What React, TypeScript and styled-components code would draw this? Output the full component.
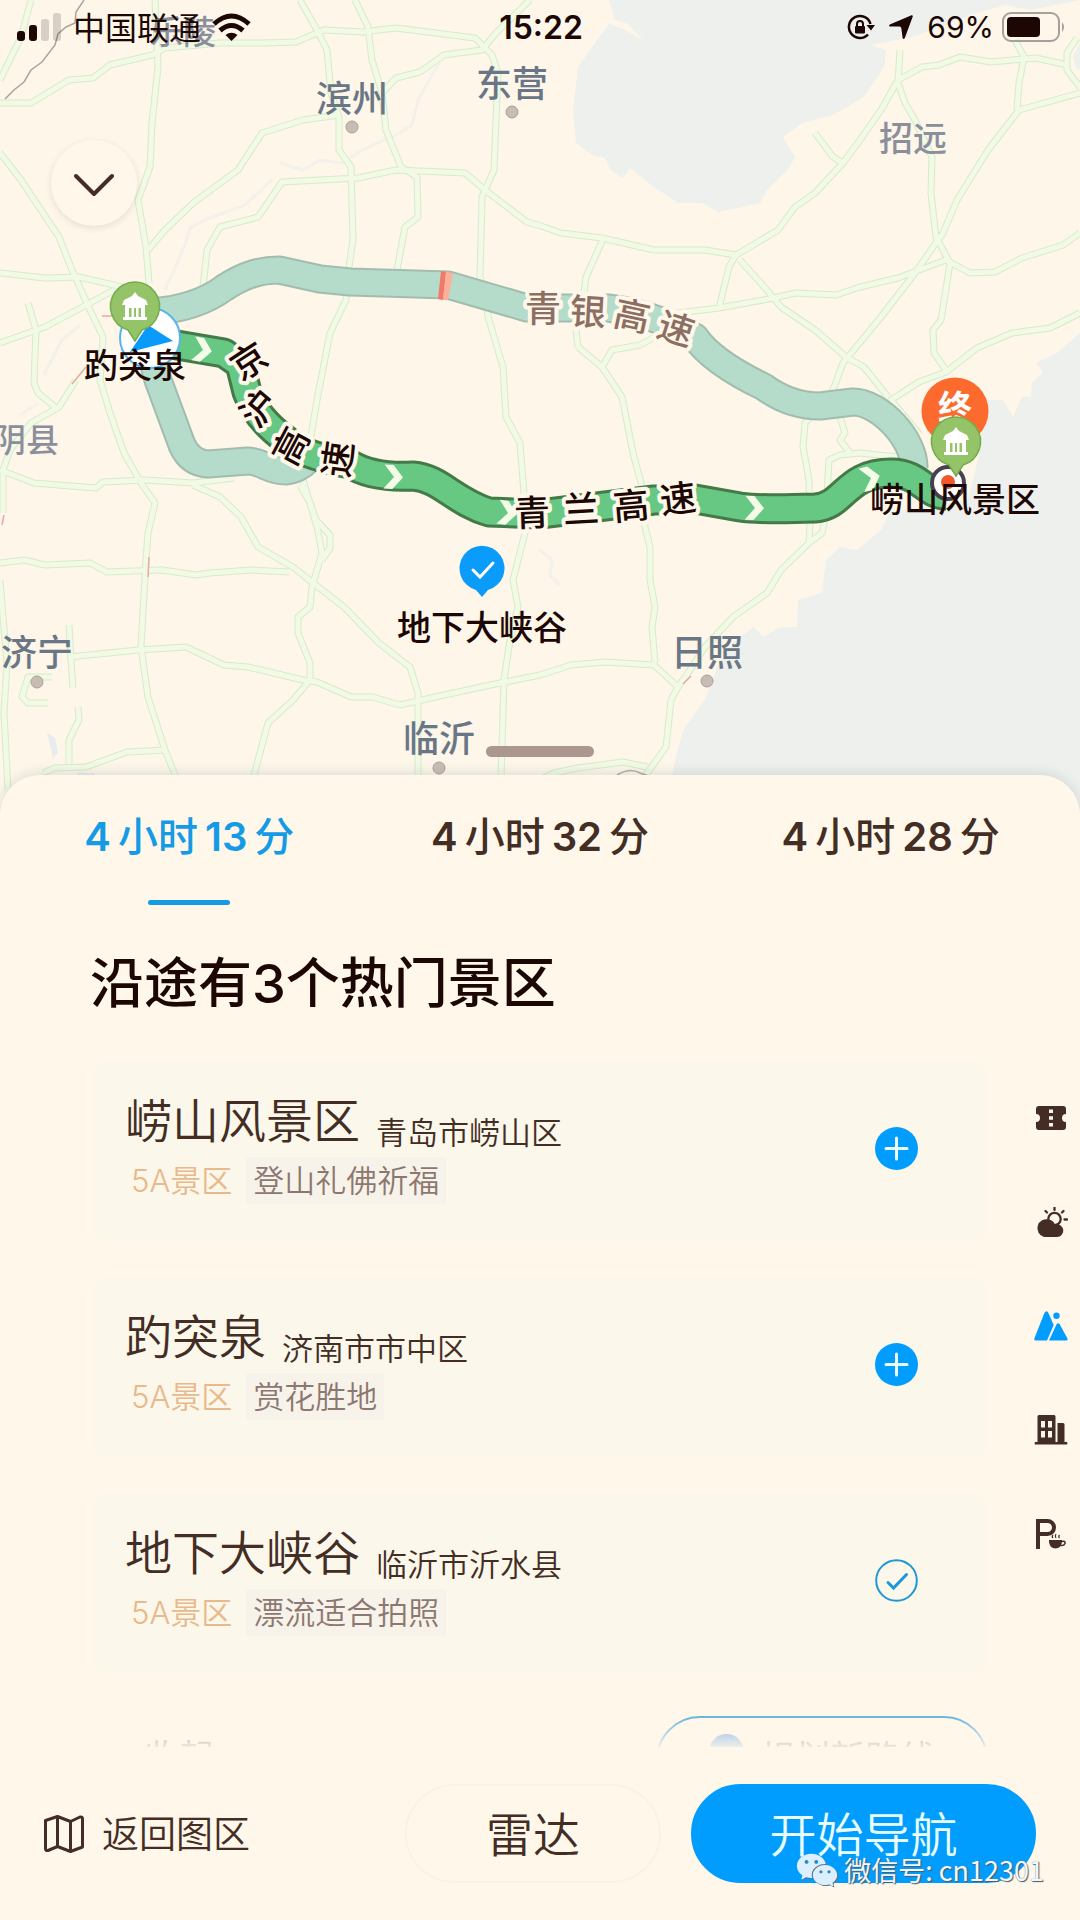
import React, { useState } from "react";
import styled, { createGlobalStyle } from "styled-components";
import { AiFillWechat } from "react-icons/ai";

const fontStack = `Inter, "Noto Sans CJK SC", sans-serif`;
const color = {
  sheet: "#fff8ea",
  card: "#fbf7ea",
  chip: "#f8f3ea",
  ink: "#1c0705",
  brown: "#432d25",
  muted: "#8c7870",
  gold: "#e8b98b",
  blue: "#009dff",
  tab: "#159be6",
};

const GlobalStyle = createGlobalStyle`
  * { box-sizing: border-box; }
  body { margin: 0; background: ${color.sheet}; font-family: ${fontStack}; }
  button { font: inherit; border: 0; background: none; padding: 0; margin: 0; cursor: pointer; }
`;

const Page = styled.main`
  display: flex;
  flex-direction: column;
  height: 100vh;
  overflow: hidden;
  background: ${color.sheet};
`;

/* ---------- map ---------- */

const MapArea = styled.section`
  position: relative;
  flex: none;
`;
const MapSvg = styled.svg`
  display: block;
  width: 100%;
  height: auto;
  font-family: "Noto Sans CJK SC", sans-serif;
  text-anchor: middle;
`;
const StatusBar = styled.header`
  position: absolute;
  inset: 0 0 auto;
  height: 54px;
  padding: 0 14px 0 16px;
  display: grid;
  grid-template-columns: 1fr auto 1fr;
  align-items: center;
  color: ${color.ink};
  font-size: 30px;
`;
const StatusSide = styled.div<{ $end?: boolean; $gap: number }>`
  display: flex;
  align-items: center;
  justify-content: ${(p) => (p.$end ? "flex-end" : "flex-start")};
  gap: ${(p) => p.$gap}px;
`;
const Carrier = styled.span`
  padding-bottom: 2px;
  font-size: 32px;
  line-height: 40px;
  font-family: "Noto Sans CJK SC", sans-serif;
`;
const Clock = styled.time`
  font-size: 32px;
  font-weight: 600;
`;
const Collapse = styled.button`
  position: absolute;
  left: 51px;
  top: 140px;
  width: 86px;
  height: 86px;
  padding-top: 4px;
  border-radius: 50%;
  background: ${color.sheet};
  box-shadow: 0 2px 6px rgba(110, 80, 60, 0.14);
  display: grid;
  place-items: center;
`;
const Handle = styled.div`
  position: absolute;
  left: 50%;
  bottom: 53px;
  width: 108px;
  height: 11px;
  margin-left: -54px;
  border-radius: 6px;
  background: #ab978e;
`;

/* ---------- sheet ---------- */

const Sheet = styled.section`
  position: relative;
  flex: 1;
  min-height: 0;
  margin-top: -35px;
  display: flex;
  flex-direction: column;
  border-radius: 40px 40px 0 0;
  background: ${color.sheet};
  box-shadow: 0 -2px 12px rgba(90, 110, 130, 0.18);
`;
const Tabs = styled.div`
  display: flex;
  flex: none;
  padding: 0 14px;
`;
const Tab = styled.button<{ $active: boolean }>`
  flex: 1;
  display: flex;
  flex-direction: column;
  align-items: center;
  padding-top: 38px;
  color: ${(p) => (p.$active ? color.tab : color.brown)};

  &::after {
    content: "";
    width: 82px;
    height: 5px;
    margin-top: 39px;
    border-radius: 3px;
    background: ${(p) => (p.$active ? color.tab : "transparent")};
  }
`;
const TabText = styled.span`
  display: flex;
  align-items: center;
  gap: 7px;
  font-size: 40px;
  line-height: 48px;
  font-weight: 500;
`;
const Num = styled.b`
  font-weight: 600;
`;
const Title = styled.h1`
  flex: none;
  margin: 47px 90px 44px;
  font-size: 54px;
  line-height: 64px;
  font-weight: 500;
  color: ${color.ink};
`;
const Body = styled.div`
  flex: 1;
  min-height: 0;
  display: flex;
  padding-left: 92px;
  overflow: hidden;
`;
const List = styled.ul`
  flex: 1;
  margin: 0;
  padding: 0;
  list-style: none;
  display: flex;
  flex-direction: column;
  gap: 34px;
`;
const Card = styled.li`
  flex: none;
  display: flex;
  align-items: center;
  justify-content: space-between;
  padding: 33px 70px 38px 33px;
  border-radius: 20px;
  background: ${color.card};
`;
const NameRow = styled.div`
  display: flex;
  align-items: flex-end;
  gap: 16px;
  color: ${color.brown};
`;
const Name = styled.h2`
  margin: 0;
  font-size: 47px;
  line-height: 56px;
  font-weight: 350;
`;
const Place = styled.span`
  font-size: 31px;
  line-height: 32px;
  font-weight: 350;
`;
const TagRow = styled.div`
  display: flex;
  align-items: center;
  margin-top: 8px;
  font-size: 31px;
  line-height: 47px;
  font-weight: 350;
`;
const Grade = styled.span`
  padding: 0 14px 0 6px;
  color: ${color.gold};
`;
const Chip = styled.span`
  padding: 0 7px;
  border-radius: 4px;
  background: ${color.chip};
  color: ${color.muted};
`;
const RoundButton = styled.button`
  width: 43px;
  height: 43px;
  flex: none;
  svg { display: block; }
`;
const FooterRow = styled.li`
  flex: none;
  display: flex;
  align-items: center;
  justify-content: space-between;
  padding: 8px 0 0 52px;
`;
const FoldButton = styled.button`
  padding-bottom: 12px;
  font-size: 35px;
  color: ${color.muted};
`;
const PlanButton = styled.button`
  width: 332px;
  height: 88px;
  padding-bottom: 10px;
  display: flex;
  align-items: center;
  justify-content: center;
  gap: 16px;
  border: 2px solid #5aaedb;
  border-radius: 44px;
  font-size: 35px;
  color: ${color.muted};
`;
const Dot = styled.i`
  width: 35px;
  height: 42px;
  border-radius: 18px;
  background: #6fa8e6;
`;
const Rail = styled.nav`
  width: 92px;
  padding: 6px 11px 0 0;
  display: flex;
  flex-direction: column;
  align-items: flex-end;
`;
const RailButton = styled.button<{ $active?: boolean }>`
  width: 36px;
  height: 104px;
  flex: none;
  display: grid;
  place-items: center;
  color: ${(p) => (p.$active ? color.blue : color.brown)};
`;

/* ---------- bottom bar ---------- */

const BottomBar = styled.footer`
  position: relative;
  flex: none;
  display: flex;
  align-items: center;
  gap: 30px;
  padding: 37px 44px 37px;
  background: ${color.sheet};
  box-shadow: 0 -1px 2px rgba(140, 90, 60, 0.04);

  &::before {
    content: "";
    position: absolute;
    inset: -34px 0 auto;
    height: 34px;
    background: linear-gradient(rgba(255, 248, 234, 0), rgba(255, 248, 234, 0.88));
  }
`;
const BackButton = styled.button`
  display: flex;
  align-items: center;
  gap: 18px;
  margin-right: auto;
  font-size: 37px;
  font-weight: 350;
  color: ${color.brown};
`;
const BackLabel = styled.span`
  padding-bottom: 4px;
`;
const Pill = styled.button<{ $primary?: boolean }>`
  width: ${(p) => (p.$primary ? 345 : 256)}px;
  height: 99px;
  padding-bottom: 4px;
  border-radius: 50px;
  border: 2px solid ${(p) => (p.$primary ? color.blue : "#fbf1e4")};
  background: ${(p) => (p.$primary ? color.blue : "transparent")};
  color: ${(p) => (p.$primary ? "#e9ffff" : color.brown)};
  font-size: 47px;
  font-weight: 350;
`;
const Watermark = styled.div`
  position: absolute;
  right: 36px;
  bottom: 27px;
  display: flex;
  align-items: center;
  gap: 4px;
  font-family: "Noto Sans CJK SC", sans-serif;
  font-size: 27px;
  line-height: 40px;
  color: #eef8ff;
  text-shadow: 1px 1px 1px #4c5a66, 0 0 1px #6b7680;
  pointer-events: none;
  svg { color: #dcefff; filter: drop-shadow(1px 1px 0 #5f7485); }
`;

/* ---------- map data ---------- */

const seas = [
  "609,0 614,17 595,43 578,67 573,110 576,143 592,155 605,158 611,170 623,178 630,168 654,187 678,203 702,203 719,212 760,203 767,190 788,170 795,157 783,137 802,123 833,115 864,97 884,67 886,50 870,45 912,37 946,25 970,15 1005,5 1030,10 1080,0",
  "1080,333 1057,353 1036,363 1043,372 1032,383 1031,397 1022,397 1013,417 1003,400 988,400 983,420 978,460 968,500 890,512 881,530 857,550 840,547 826,560 822,593 798,600 797,627 778,628 764,637 753,627 733,643 719,663 705,700 685,727 678,747 665,810 1080,810",
  "1080,44 1073,55 1076,68 1080,70",
];

const roads = [
  "155,0 157,43 158,67 152,123 150,167 138,200 146,247 149,283",
  "31,0 21,37 0,80",
  "0,103 31,103 69,80 93,78 110,65 152,55 165,48 220,43 265,43 296,42 324,30 362,32 396,28 475,38 492,55 498,73 496,120 494,170 482,197 480,277 489,320 503,367 506,417 520,443 524,493 525,533 513,580 518,607 510,640 504,680 500,810",
  "300,0 317,30 327,50 331,93 339,117 339,150 351,167 353,240 349,267 346,300 330,333 317,400 312,430 303,480 317,527 322,553 312,587 310,607 298,617 298,633 310,663 310,680 293,700 268,723 250,790",
  "355,0 368,27 372,60 382,93 386,130 401,167 417,177 418,217 405,227 396,275",
  "530,0 496,33 482,50 444,55 420,72 396,78 382,93",
  "148,250 165,230 193,203 238,170 262,133 303,120 339,115",
  "203,287 207,250 220,227 258,217 282,182 358,178 396,170 465,173 485,190 527,222 541,226 561,233 602,238 654,250 705,250 736,255",
  "0,153 21,180 59,237 72,270 90,310 103,337 100,380 110,413 124,453 141,483 155,503 148,533 146,560 141,647 148,697 165,750 185,800",
  "0,273 45,278 79,277 114,285 140,293",
  "0,343 45,327 90,303 114,290",
  "28,303 36,330 34,383 38,393 55,407",
  "76,380 59,407 31,423 10,450 3,470 3,513",
  "0,470 34,483 96,488 103,482 145,480 193,483 234,478",
  "193,485 220,497 241,517 258,547 293,567 313,583 344,607 379,643 410,667 418,693 418,790",
  "0,563 24,560 45,565 90,563 107,572 162,570 196,575 210,573 251,570 289,572",
  "69,657 138,650 186,647 224,665 248,667 303,680 317,682 351,697 372,697 400,705 444,695 500,683 540,675 571,665 605,662 654,665 678,687 671,700 666,747 635,790",
  "0,580 5,640 7,663 4,713 8,790",
  "69,625 71,660 73,688",
  "78,707 79,720 69,740 69,763",
  "43,773 55,768 86,767 127,752 165,750",
  "52,677 28,677 22,697 28,703 48,703",
  "300,485 310,503 316,520 330,535 330,548 322,560",
  "530,785 554,773 578,768 623,762 647,767",
  "678,687 688,673 705,647 733,617 767,593 781,570 809,543 822,533 826,513 829,460 840,455 860,453 898,457",
  "809,543 810,523 809,480 803,447 805,423 833,390 843,363 881,317 915,273 933,247 943,233 957,200 988,150 1019,110 1080,93",
  "578,347 602,367 622,397 626,417 633,453 643,490 645,527 650,547 650,580 655,607 652,627 655,663",
  "604,237 586,277 584,293 576,330 578,347",
  "602,367 612,350 640,345 655,337",
  "670,314 719,308 774,298 795,293 836,295 860,287 898,278 946,260 970,273 995,272 1022,258 1063,245 1080,233",
  "719,308 729,267 736,255 753,245 778,230 795,207 815,193 843,163 860,140 881,110 898,80 922,67 939,65 960,57 991,62 1036,58 1067,65",
  "1077,38 1067,53 1067,70 1080,87",
  "900,50 898,83 905,103 915,120 932,157 931,193 936,237 950,263 941,320 933,330 934,353 946,370",
  "1015,40 1024,57 1019,83 1017,110",
  "815,133 833,157 843,163",
  "740,260 767,290 781,307 815,330 846,357 864,367 888,397",
  "1080,313 1050,328 1012,333 977,348 946,372 919,382 891,400 920,435",
  "840,417 845,433 840,440 850,453",
];

const rivers = [
  "280,163 303,170 320,160 342,163 362,150 396,135 412,125 418,100 432,75 440,62",
  "165,290 185,245 190,228 205,220 245,205 272,180",
  "540,550 552,560 550,575 560,585",
  "44,375 62,340 80,325",
  "20,415 38,403",
];

const upperRoute =
  "M150 312C190 309 212 297 224 288C244 275 260 270 279 270L320 279L350 282L448 285L527 308L608 308Q655 314 695 337Q712 362 764 387Q790 406 820 406L853 402C880 402 915 440 914 468";
const lowerRoute =
  "M150 350L158 380L182 445Q190 463 208 464L248 461C262 461 268 471 286 471Q298 470 308 460";
const mainRoute =
  "M165 343L224 353L240 364L247 392Q256 418 286 440Q300 455 350 464Q372 478 413 476C440 478 455 502 489 512L540 514L654 500L695 499L740 507Q760 510 815 508C845 506 845 473 891 473C920 473 925 495 946 495";

const cities = [
  { t: "滨州", x: 352, y: 112, s: 36, dot: 127 },
  { t: "东营", x: 512, y: 97, s: 36, dot: 112 },
  { t: "济宁", x: 37, y: 666, s: 36, dot: 682 },
  { t: "日照", x: 707, y: 666, s: 36, dot: 681 },
  { t: "临沂", x: 439, y: 752, s: 36, dot: 768 },
];
const towns = [
  { t: "招远", x: 913, y: 151, s: 34 },
  { t: "乐陵", x: 183, y: 44, s: 33 },
  { t: "阴县", x: 26, y: 452, s: 33 },
];

type Glyph = [string, number, number, number];
const fadedLabel: Glyph[] = [["青", 543, 309, 0], ["银", 588, 312, 3], ["高", 632, 316, 12], ["速", 676, 329, 18]];
const mainLabel: Glyph[] = [
  ["京", 249, 361, -33], ["沪", 259, 408, -50], ["高", 291, 446, -62], ["速", 338, 459, -82],
  ["青", 532, 513, -2], ["兰", 581, 509, -3], ["高", 631, 506, -5], ["速", 678, 499, -7],
];

const RoadLabel = ({ glyphs, fill }: { glyphs: Glyph[]; fill: string }) => (
  <g fontSize={36} fontWeight={500} fill={fill} stroke="#fff8ea" strokeWidth={8} strokeLinejoin="round" paintOrder="stroke">
    {glyphs.map(([ch, x, y, r]) => (
      <text key={`${ch}${x}`} y={13} transform={`translate(${x} ${y}) rotate(${r})`}>{ch}</text>
    ))}
  </g>
);

const ScenicPin = ({ x, y }: { x: number; y: number }) => (
  <g transform={`translate(${x} ${y})`}>
    <path d="M0 35L-7 24A24.500 24.500 0 1 1 7 24Z" fill="#94c467" stroke="#74ab4c" strokeWidth="1.500" />
    <g fill="#fff">
      <path d="M0 -14L3 -10L11 -6L13 -1H-13L-11 -6L-3 -10Z" />
      <path d="M-10 -1h4v12h-4zM6 -1h4v12h-4zM-3.500 2h2.500v9h-2.500zM1 2h2.500v9h-2.500zM-12 11h24v3h-24z" />
      <path d="M-8 -1h16v3h-16z" />
    </g>
  </g>
);

const RouteMap = () => (
  <MapSvg viewBox="0 0 1080 810" role="img" aria-label="路线地图">
    <rect width="1080" height="810" fill="#fdf6e9" />
    {seas.map((p) => <polygon key={p} points={p} fill="#edf0ec" />)}
    <path d="M575 10L603 16L628 24L643 40L625 30L600 20Z" fill="#fdf6e9" />
    <g fill="none" stroke="#f4f0ea" strokeWidth="3">
      {rivers.map((p) => <polyline key={p} points={p} />)}
    </g>
    <path d="M77 773h18v16h-18zM47 733l8 5 3 15-5 5z" fill="#e9ecee" />
    <g fill="none" strokeLinejoin="round">
      <g stroke="#d6ebcd" strokeWidth="7">{roads.map((p) => <polyline key={p} points={p} />)}</g>
      <g stroke="#f2f9e4" strokeWidth="5">{roads.map((p) => <polyline key={p} points={p} />)}</g>
    </g>
    <path d="M84 0L76 12L75 23L66 27L58 34L55 45L42 62L31 70L24 82L14 90L5 99" fill="none" stroke="#aaa39f" strokeWidth="1.500" />
    <path d="M617 775Q630 767 640 773L655 778" fill="none" stroke="#b9a9a2" strokeWidth="1.500" />
    <g stroke="#eaa9a0" strokeWidth="1.500" fill="none">
      <path d="M149 557L148 577M683 684L691 676M72 384L86 367M102 316h10M2 525L4 515" />
    </g>

    <g fontWeight={500}>
      {cities.map((c) => (
        <g key={c.t}>
          <circle cx={c.x} cy={c.dot} r="6" fill="#c9bdb3" stroke="#aa9f97" strokeWidth="1" />
          <text x={c.x} y={c.y} fontSize={c.s} fill="#6a7685">{c.t}</text>
        </g>
      ))}
      {towns.map((c) => <text key={c.t} x={c.x} y={c.y} fontSize={c.s} fill="#8b8f9c">{c.t}</text>)}
    </g>

    <g fill="none" strokeLinejoin="round">
      <path d={upperRoute} stroke="#a2bcae" strokeWidth="29" />
      <path d={upperRoute} stroke="#b5dccb" strokeWidth="25" />
      <path d={lowerRoute} stroke="#a2bcae" strokeWidth="29" strokeLinecap="round" />
      <path d={lowerRoute} stroke="#b5dccb" strokeWidth="25" strokeLinecap="round" />
    </g>
    <path d="M441 271L446 272L443 300L438 299Z" fill="#f2786a" />
    <path d="M446 272L453 273L448 300L443 300Z" fill="#ffaf97" />
    <RoadLabel glyphs={fadedLabel} fill="#8c6e63" />
    <g fill="none" strokeLinejoin="round">
      <path d={mainRoute} stroke="#437a47" strokeWidth="31" />
      <path d={mainRoute} stroke="#66c882" strokeWidth="25" />
    </g>
    <g fill="#f4fbe6">
      {[[203, 350, 10], [394, 477, 3], [508, 513, 8], [755, 508, 2], [871, 478, -14]].map(([x, y, r]) => (
        <path key={x} transform={`translate(${x} ${y}) rotate(${r})`} d="M-10 -12H-1L9 0L-1 12H-10L0 0Z" />
      ))}
    </g>
    <RoadLabel glyphs={mainLabel} fill="#1c0705" />

    <circle cx="150" cy="338" r="30" fill="#fff" stroke="#58b4ef" strokeWidth="2" />
    <path d="M173 341L148 325L130 352Z" fill="#0a9bfa" />
    <ScenicPin x={135} y={306} />

    <circle cx="955" cy="411" r="33.500" fill="#fd6a2e" />
    <text x="955" y="420" fontSize="34" fontWeight="700" fill="#fff">终</text>
    <circle cx="948" cy="483" r="16" fill="#fff" stroke="#454052" strokeWidth="4" />
    <circle cx="948" cy="482" r="7" fill="#f4572a" />
    <ScenicPin x={956} y={441} />

    <path d="M482 597L476 590A22.500 22.500 0 1 1 488 590Z" fill="#0b9bfb" />
    <path d="M473 570L480 577L493 563" fill="none" stroke="#fff" strokeWidth="3" strokeLinecap="round" />

    <g fontSize={34} fontWeight={500} fill="#1c0705">
      <text x="135" y="378">趵突泉</text>
      <text x="482" y="640">地下大峡谷</text>
      <text x="955" y="512">崂山风景区</text>
    </g>
  </MapSvg>
);

/* ---------- icons ---------- */

const SignalIcon = () => (
  <svg width="46" height="30" viewBox="0 0 46 30" fill={color.ink}>
    <rect x="1" y="19" width="8" height="10" rx="3" />
    <rect x="13" y="13" width="8" height="16" rx="3" />
    <rect x="25" y="7" width="8" height="22" rx="3" opacity=".16" />
    <rect x="37" y="1" width="8" height="28" rx="3" opacity=".16" />
  </svg>
);
const WifiIcon = () => (
  <svg width="39" height="29" viewBox="0 0 39 29" fill="none" stroke={color.ink} strokeWidth="5">
    <path d="M2 11Q19.500 -5 37 11M8 17.500Q19.500 7.500 31 17.500" />
    <path d="M19.500 28L13.500 22Q19.500 17.500 25.500 22Z" fill={color.ink} stroke="none" />
  </svg>
);
const LockIcon = () => (
  <svg width="28" height="26" viewBox="0 0 28 26" fill="none" stroke={color.ink} strokeWidth="2.500">
    <path d="M23.500 10A11 11 0 1 0 21 20.500" />
    <path d="M19.500 11H28L24 16.500Z" fill={color.ink} stroke="none" />
    <rect x="8" y="12" width="10" height="7.500" rx="1" fill={color.ink} stroke="none" />
    <path d="M10 13V10a3 3 0 0 1 6 0v3" strokeWidth="2" />
  </svg>
);
const ArrowIcon = () => (
  <svg width="24" height="24" viewBox="0 0 24 24" fill={color.ink}>
    <path d="M22.500 .2Q24.300 0 23.600 2L15.800 23Q14.800 24.800 13.600 23L12.300 13Q12 11.500 10.500 11.500L1 11.500Q-.8 11 .8 9.500Z" />
  </svg>
);
const BatteryIcon = () => (
  <svg width="64" height="30" viewBox="0 0 64 30">
    <rect x="1" y="1" width="56" height="28" rx="8" fill="none" stroke="#a79f9b" strokeWidth="2" />
    <rect x="5" y="5" width="33" height="20" rx="4" fill={color.ink} />
    <path d="M60 10q4 5 0 10z" fill="#a79f9b" />
  </svg>
);
const PlusIcon = () => (
  <svg width="43" height="43" viewBox="0 0 43 43">
    <circle cx="21.500" cy="21.500" r="21.500" fill={color.blue} />
    <path d="M21.500 11V32M11 21.500H32" stroke="#eaffff" strokeWidth="3" strokeLinecap="round" />
  </svg>
);
const CheckIcon = () => (
  <svg width="43" height="43" viewBox="0 0 43 43" fill="none" stroke="#1d97d8" strokeLinecap="round">
    <circle cx="21.500" cy="21.500" r="20.300" strokeWidth="2" />
    <path d="M13 23.500L18.500 29L31.500 15.500" strokeWidth="3" />
  </svg>
);
const TicketIcon = () => (
  <svg width="30" height="24" viewBox="0 0 30 24">
    <path fill="currentColor" fillRule="evenodd" d="M3 0H27Q30 0 30 3V8A4 4 0 0 0 30 16V21Q30 24 27 24H3Q0 24 0 21V16A4 4 0 0 0 0 8V3Q0 0 3 0ZM13 3.500v3.500h4V3.500ZM13 10.300v3.500h4v-3.500ZM13 17v3.500h4V17Z" />
  </svg>
);
const WeatherIcon = () => (
  <svg width="33" height="30" viewBox="0 0 33 30">
    <circle cx="19.500" cy="12" r="6.200" fill="none" stroke="currentColor" strokeWidth="2.300" />
    <path d="M19.500 .8V3M10.500 4L12 5.500M28.500 4L27 5.500M29.500 12.500H32" stroke="currentColor" strokeWidth="2.300" strokeLinecap="round" />
    <path fill="currentColor" d="M9 30A9 9 0 1 1 14 12.500Q18.500 13.500 20 17.500A6.400 6.400 0 1 1 22 30Z" />
  </svg>
);
const MountainIcon = () => (
  <svg width="34" height="30" viewBox="0 0 34 30" fill="currentColor">
    <path d="M10.500 1.800Q12.300 -1.200 14.200 1.500L19.700 14L13 29.500H2Q-.5 29.500 .5 27Z" />
    <path d="M22.500 13.500Q24 11 25.800 13.500L33.200 27Q34.200 29.500 32 29.500H15Z" />
    <circle cx="22.500" cy="4.800" r="3.200" />
  </svg>
);
const BuildingIcon = () => (
  <svg width="34" height="30" viewBox="0 0 34 30" fill="currentColor">
    <path fillRule="evenodd" d="M5 0H20Q21.500 0 21.500 1.500V27H3.500V1.500Q3.500 0 5 0ZM7 6V12.500h4V6ZM14 6V12.500h4V6ZM7 16v6.500h4V16ZM14 16v6.500h4V16Z" />
    <path d="M23.500 8H29Q30.500 8 30.500 9.500V27H23.500ZM1 27H33Q34 28.500 33 29.500H1Q0 28.500 1 27Z" />
  </svg>
);
const ServiceIcon = () => (
  <svg width="30" height="30" viewBox="0 0 30 30" fill="none" stroke="currentColor">
    <path d="M2 30V2H11.500A6 6 0 0 1 11.500 15H2" strokeWidth="4" />
    <path d="M13 21H26V23Q25 29.500 19.500 29.500Q14 29.500 13 23Z" fill="currentColor" stroke="none" />
    <path d="M25.500 22.500Q29.500 21.500 29 24.500Q28 27 24.500 26.500" strokeWidth="1.500" />
    <path d="M17 19Q15.500 17.500 17 16M20 19Q18.500 17 20 15M23.500 19Q22 17.500 23.500 16" strokeWidth="1.200" />
  </svg>
);
const MapIcon = () => (
  <svg width="40" height="38" viewBox="0 0 40 38" fill="none" stroke={color.brown} strokeWidth="3" strokeLinejoin="round">
    <path d="M1.500 5.500L13.500 1.500L26.500 6.500L36 2Q38.500 1.500 38.500 4V32L26.500 36.500L13.500 31.500L4 35.500Q1.500 36 1.500 33.500ZM13.500 1.500V31.500M26.500 6.500V36.500" />
  </svg>
);

/* ---------- content ---------- */

const routes = [["4", "13"], ["4", "32"], ["4", "28"]];
const initialSpots = [
  { name: "崂山风景区", place: "青岛市崂山区", tag: "登山礼佛祈福", added: false },
  { name: "趵突泉", place: "济南市市中区", tag: "赏花胜地", added: false },
  { name: "地下大峡谷", place: "临沂市沂水县", tag: "漂流适合拍照", added: true },
];
const categories = [
  { label: "门票", Icon: TicketIcon },
  { label: "天气", Icon: WeatherIcon },
  { label: "景区", Icon: MountainIcon },
  { label: "城市", Icon: BuildingIcon },
  { label: "服务区", Icon: ServiceIcon },
];

export default function App() {
  const [route, setRoute] = useState(0);
  const [category, setCategory] = useState(2);
  const [spots, setSpots] = useState(initialSpots);
  const toggle = (i: number) =>
    setSpots(spots.map((s, k) => (k === i ? { ...s, added: !s.added } : s)));

  return (
    <Page lang="zh-CN">
      <GlobalStyle />
      <MapArea>
        <RouteMap />
        <StatusBar>
          <StatusSide $gap={11}>
            <SignalIcon />
            <Carrier>中国联通</Carrier>
            <WifiIcon />
          </StatusSide>
          <Clock>15:22</Clock>
          <StatusSide $end $gap={14}>
            <LockIcon />
            <ArrowIcon />
            <StatusSide $gap={8}>
              <span>69%</span>
              <BatteryIcon />
            </StatusSide>
          </StatusSide>
        </StatusBar>
        <Collapse aria-label="收起路线">
          <svg width="40" height="24" viewBox="0 0 40 24" fill="none" stroke={color.brown} strokeWidth="4" strokeLinecap="round" strokeLinejoin="round">
            <path d="M2 3L20 21L38 3" />
          </svg>
        </Collapse>
        <Handle />
      </MapArea>

      <Sheet>
        <Tabs role="tablist">
          {routes.map(([h, m], i) => (
            <Tab key={m} role="tab" aria-selected={route === i} $active={route === i} onClick={() => setRoute(i)}>
              <TabText>
                <Num>{h}</Num>小时<Num>{m}</Num>分
              </TabText>
            </Tab>
          ))}
        </Tabs>
        <Title>沿途有3个热门景区</Title>
        <Body>
          <List>
            {spots.map((s, i) => (
              <Card key={s.name}>
                <div>
                  <NameRow>
                    <Name>{s.name}</Name>
                    <Place>{s.place}</Place>
                  </NameRow>
                  <TagRow>
                    <Grade>5A景区</Grade>
                    <Chip>{s.tag}</Chip>
                  </TagRow>
                </div>
                <RoundButton aria-label={s.added ? "已添加" : "添加"} onClick={() => toggle(i)}>
                  {s.added ? <CheckIcon /> : <PlusIcon />}
                </RoundButton>
              </Card>
            ))}
            <FooterRow>
              <FoldButton>收起</FoldButton>
              <PlanButton>
                <Dot />
                规划新路线
              </PlanButton>
            </FooterRow>
          </List>
          <Rail>
            {categories.map(({ label, Icon }, i) => (
              <RailButton key={label} aria-label={label} $active={category === i} onClick={() => setCategory(i)}>
                <Icon />
              </RailButton>
            ))}
          </Rail>
        </Body>
      </Sheet>

      <BottomBar>
        <BackButton>
          <MapIcon />
          <BackLabel>返回图区</BackLabel>
        </BackButton>
        <Pill>雷达</Pill>
        <Pill $primary>开始导航</Pill>
        <Watermark>
          <AiFillWechat size={46} />
          微信号: cn12301
        </Watermark>
      </BottomBar>
    </Page>
  );
}
